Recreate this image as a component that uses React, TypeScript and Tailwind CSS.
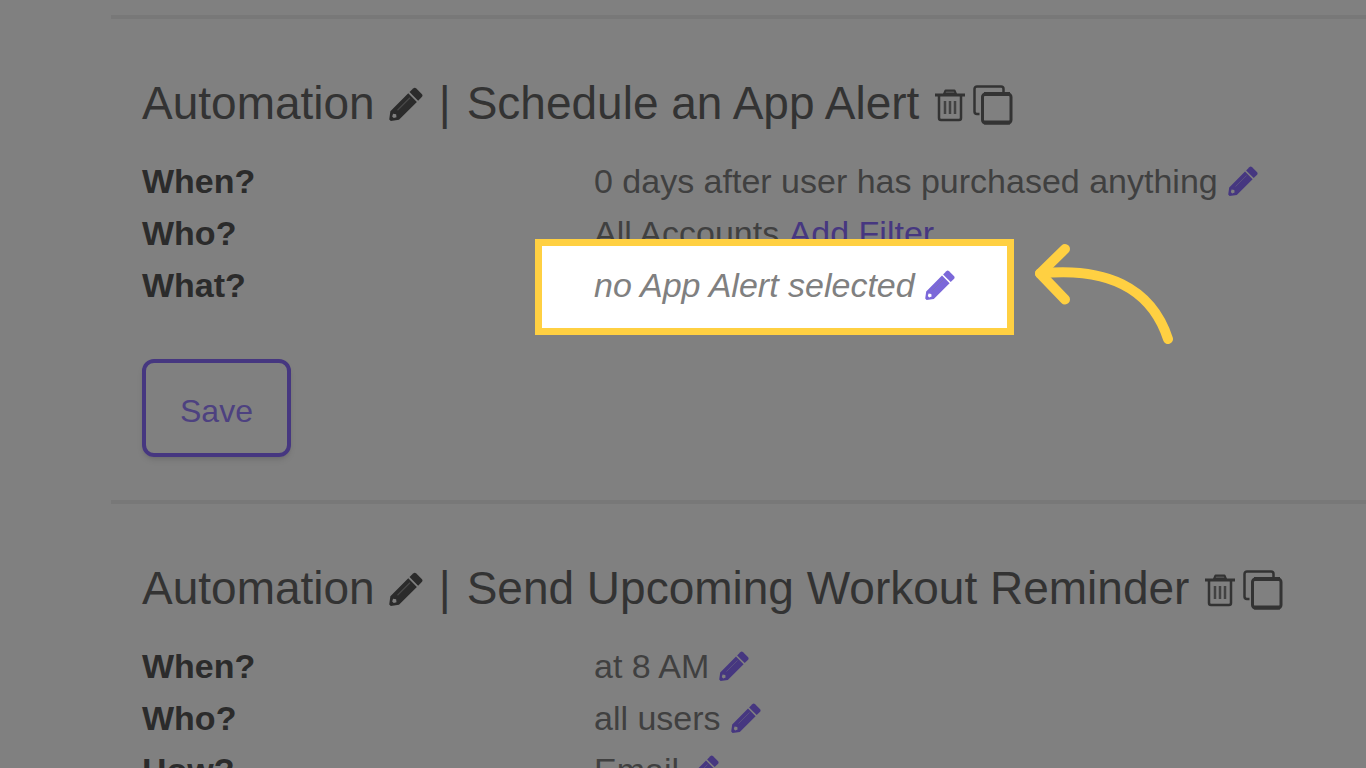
import type { ReactNode } from 'react';

function Pencil({ className }: { className: string }) {
  return (
    <svg viewBox="0 0 30 30" fill="currentColor" className={className} aria-hidden="true">
      <path d="M21.300 1.300a2 2 0 0 1 2.800 0l4.800 4.800a2 2 0 0 1 0 2.800l-3.200 3.200-7.600-7.600z" />
      <path
        fillRule="evenodd"
        d="M17 5.600l7.600 7.600L8.800 29 1.600 30 0.200 28.600 1.200 21.400zM3.600 23.600l-.8 2.400 1.400 1.400 2.400-.8-.3-2.600z"
      />
      <path d="M7.500 20.500L18.500 9.500" stroke="#808080" strokeOpacity="0.35" strokeWidth="1" />
    </svg>
  );
}

function Trash() {
  return (
    <svg viewBox="0 0 30 34" fill="none" stroke="currentColor" className="h-[34px] w-[30px]" aria-hidden="true">
      <path d="M9 6l1.500-3.500h9L21 6z" fill="currentColor" fillOpacity="0.6" strokeWidth="2" strokeLinejoin="round" />
      <path d="M0 7h30" strokeWidth="3" />
      <path d="M4 8v22a2 2 0 0 0 2 2h18a2 2 0 0 0 2-2V8" strokeWidth="2.500" />
      <path d="M10 13v13M15 13v13M20 13v13" strokeWidth="2.500" strokeOpacity="0.8" />
    </svg>
  );
}

function Copy() {
  return (
    <svg viewBox="0 0 40 40" fill="none" stroke="currentColor" className="h-10 w-10" aria-hidden="true">
      <path d="M30.500 7V4a2.500 2.500 0 0 0-2.500-2.500H4A2.500 2.500 0 0 0 1.500 4v22.500a2.500 2.500 0 0 0 2.500 2.500h2.500" strokeWidth="2.500" />
      <rect x="9.500" y="9" width="28.500" height="29" rx="3" strokeWidth="3" />
      <path d="M11 9h26M11 37.500h26" strokeWidth="4" />
    </svg>
  );
}

function EditButton({ label }: { label: string }) {
  return (
    <button type="button" aria-label={label} className="ml-2.5 text-[#463780]">
      <Pencil className="size-[30px]" />
    </button>
  );
}

function Row({ label, children }: { label: string; children: ReactNode }) {
  return (
    <div className="grid grid-cols-[452px_1fr]">
      <dt className="font-bold text-[#2b2b2b]">{label}</dt>
      <dd className="flex items-center whitespace-nowrap">{children}</dd>
    </div>
  );
}

function Automation({ title, children }: { title: string; children: ReactNode }) {
  return (
    <section className="border-t-4 border-[#787878] pt-14 pl-[31px]">
      <h2 className="flex items-center whitespace-nowrap text-[46px] leading-[56px]">
        Automation
        <button type="button" aria-label="Rename automation" className="mt-0.5 ml-3.5 text-[#2b2b2b]">
          <Pencil className="size-[34px]" />
        </button>
        <span className="mx-4">|</span>
        {title}
        <span className="mt-1 ml-4 flex items-center gap-2">
          <button type="button" aria-label="Delete automation">
            <Trash />
          </button>
          <button type="button" aria-label="Copy automation">
            <Copy />
          </button>
        </span>
      </h2>
      {children}
    </section>
  );
}

export default function App() {
  return (
    <main className="h-screen overflow-hidden bg-[#808080] pt-[15px] pl-[111px] font-['Liberation_Sans',Arial,sans-serif] text-[#333333]">
      <Automation title="Schedule an App Alert">
        <dl className="mt-6 text-[34px] leading-[52px] text-[#404040]">
          <Row label="When?">
            0 days after user has purchased anything
            <EditButton label="Edit when" />
          </Row>
          <Row label="Who?">
            All Accounts&nbsp;
            <a href="#filter" className="text-[#463780]">
              Add Filter
            </a>
          </Row>
          <Row label="What?">
            <div className="relative">
              <div className="absolute -inset-x-[59px] -top-5 -bottom-6 border-[7px] border-[#ffd042] bg-white" />
              <div className="relative flex items-center text-[#808080] italic">
                no App Alert selected
                <button type="button" aria-label="Edit what" className="ml-2.5 text-[#7b68d9]">
                  <Pencil className="size-[30px]" />
                </button>
              </div>
              <svg
                viewBox="0 0 140 102"
                fill="none"
                stroke="#ffd042"
                strokeWidth="10"
                strokeLinecap="round"
                strokeLinejoin="round"
                className="absolute -top-4 left-full ml-20 h-[102px] w-[140px]"
                aria-hidden="true"
              >
                <path d="M30 6L5 30.500L30 56.500" />
                <path d="M5 30.500C70 24 116 44 133 96" />
              </svg>
            </div>
          </Row>
        </dl>
        <button
          type="button"
          className="mt-12 mb-[43px] block rounded-xl border-4 border-[#463780] px-[34px] pt-7 pb-[22px] text-[32px] leading-10 text-[#4d4180] shadow-md"
        >
          Save
        </button>
      </Automation>

      <Automation title="Send Upcoming Workout Reminder">
        <dl className="mt-6 text-[34px] leading-[52px] text-[#404040]">
          <Row label="When?">
            at 8 AM
            <EditButton label="Edit when" />
          </Row>
          <Row label="Who?">
            all users
            <EditButton label="Edit who" />
          </Row>
          <Row label="How?">
            Email
            <EditButton label="Edit how" />
          </Row>
        </dl>
      </Automation>
    </main>
  );
}
